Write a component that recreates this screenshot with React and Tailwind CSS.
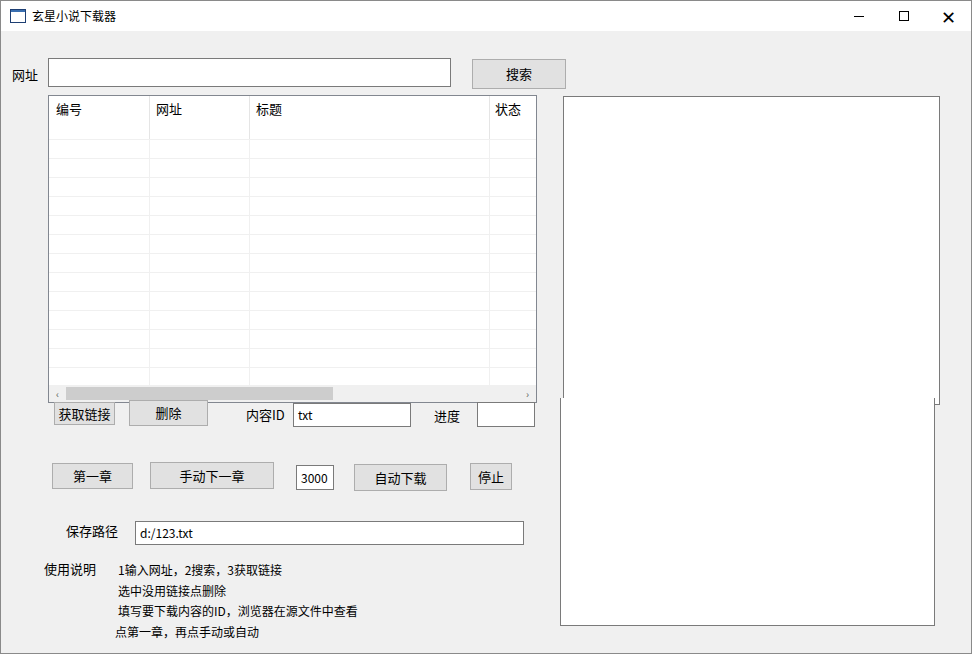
export default function App() {
  const f = { fontFamily: '"Microsoft YaHei","Noto Sans CJK SC",sans-serif' };
  const rows = Array.from({ length: 13 }, (_, i) => i);
  const btn = "absolute bg-[#e1e1e1] border border-[#adadad] text-[13px] text-black flex items-center justify-center";
  const box = "absolute bg-white border border-[#7a7a7a] text-[12px] flex items-center px-1";
  return (
    <div className="w-[972px] h-[654px] bg-[#f0f0f0] relative overflow-hidden border border-[#8a8a8a] text-[#000]" style={f}>
      <div className="h-[30px] bg-white flex items-center">
        <svg width="16" height="14" className="ml-[9px]" viewBox="0 0 16 14"><rect x="0.5" y="0.5" width="15" height="13" fill="white" stroke="#1e3f73"/><rect x="1" y="1" width="14" height="2" fill="#3a6fb0"/></svg>
        <span className="ml-[6px] text-[12px]">玄星小说下载器</span>
        <div className="ml-auto flex items-center h-full">
          <div className="w-[45px] flex justify-center"><div className="w-[10px] h-px bg-black"/></div>
          <div className="w-[45px] flex justify-center"><div className="w-[10px] h-[10px] border border-black"/></div>
          <div className="w-[45px] flex justify-center text-[18px] font-light leading-none">✕</div>
        </div>
      </div>
      <span className="absolute left-[11px] top-[64px] text-[13px]">网址</span>
      <div className="absolute left-[47px] top-[57px] w-[403px] h-[29px] bg-white border border-[#7a7a7a]"/>
      <div className={btn + " left-[471px] top-[58px] w-[94px] h-[30px]"}>搜索</div>

      <div className="absolute left-[47px] top-[94px] w-[489px] h-[308px] bg-white border border-[#828790] overflow-hidden">
        <div className="flex h-[43px] text-[13px]">
          <div className="w-[101px] pl-[7px] pt-[3px] border-r border-[#e5e5e5]">编号</div>
          <div className="w-[100px] pl-[6px] pt-[3px] border-r border-[#e5e5e5]">网址</div>
          <div className="w-[240px] pl-[6px] pt-[3px] border-r border-[#e5e5e5]">标题</div>
          <div className="pl-[5px] pt-[3px]">状态</div>
        </div>
        {rows.map(i => (
          <div key={i} className="flex h-[19px] border-t border-[#f0f0f0]">
            <div className="w-[101px] border-r border-[#f0f0f0]"/>
            <div className="w-[100px] border-r border-[#f0f0f0]"/>
            <div className="w-[240px] border-r border-[#f0f0f0]"/>
          </div>
        ))}
        <div className="absolute left-0 bottom-0 w-full h-[17px] bg-[#f0f0f0] flex items-center text-[10px] text-[#606060]">
          <span className="w-[17px] text-center">‹</span>
          <div className="w-[267px] h-[13px] bg-[#cdcdcd]"/>
          <span className="ml-auto w-[17px] text-center">›</span>
        </div>
      </div>

      <div className={btn + " left-[53px] top-[401px] w-[61px] h-[23px]"}>获取链接</div>
      <div className={btn + " left-[128px] top-[399px] w-[79px] h-[26px]"}>删除</div>
      <span className="absolute left-[245px] top-[404px] text-[13px]">内容ID</span>
      <div className={box + " left-[292px] top-[402px] w-[118px] h-[24px]"}>txt</div>
      <span className="absolute left-[433px] top-[405px] text-[13px]">进度</span>
      <div className={box + " left-[476px] top-[401px] w-[58px] h-[25px]"}/>

      <div className={btn + " left-[51px] top-[462px] w-[81px] h-[26px]"}>第一章</div>
      <div className={btn + " left-[149px] top-[461px] w-[124px] h-[27px]"}>手动下一章</div>
      <div className={box + " left-[295px] top-[464px] w-[38px] h-[25px]"}>3000</div>
      <div className={btn + " left-[353px] top-[463px] w-[93px] h-[27px]"}>自动下载</div>
      <div className={btn + " left-[469px] top-[462px] w-[42px] h-[27px]"}>停止</div>

      <span className="absolute left-[65px] top-[520px] text-[13px]">保存路径</span>
      <div className={box + " left-[134px] top-[520px] w-[389px] h-[24px]"}>d:/123.txt</div>

      <span className="absolute left-[43px] top-[558px] text-[13px]">使用说明</span>
      <div className="absolute left-[114px] top-[559px] text-[12px] leading-[20.5px]">
        <div className="pl-[3px]">1输入网址，2搜索，3获取链接</div>
        <div className="pl-[3px]">选中没用链接点删除</div>
        <div className="pl-[3px]">填写要下载内容的ID，浏览器在源文件中查看</div>
        <div>点第一章，再点手动或自动</div>
      </div>

      <div className="absolute left-[562px] top-[95px] w-[377px] h-[309px] bg-white border border-[#7a7a7a]"/>
      <div className="absolute left-[559px] top-[397px] w-[375px] h-[228px] bg-white border border-[#7a7a7a] border-t-0"/>
      <div className="absolute left-[563px] top-[396px] w-[370px] h-[8px] bg-white"/>
    </div>
  );
}
